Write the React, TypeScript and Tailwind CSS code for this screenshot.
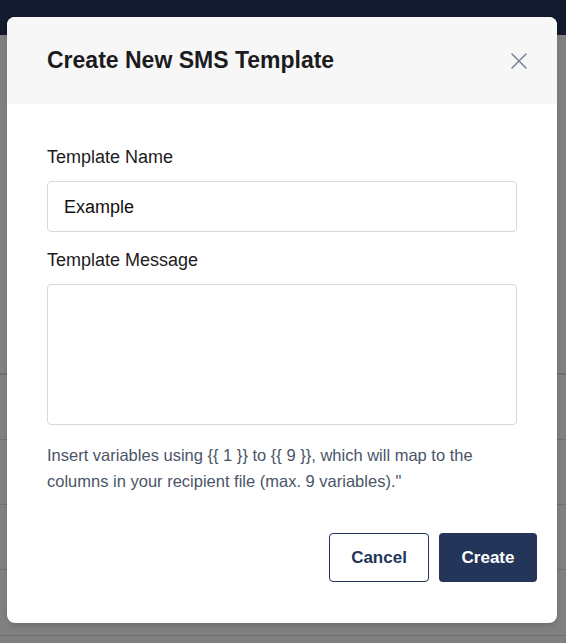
import { X } from "lucide-react";

export default function App() {
  return (
    <div className="relative h-[643px] w-[566px] overflow-hidden bg-[#808080] font-['Liberation_Sans',Arial,sans-serif]">
      <div className="h-[35px] bg-[#121a2d]" />
      <div className="h-[340px] border-b-2 border-[#6f6f6f]" />
      <div className="h-[65px] border-b border-[#6f6f6f]" />
      <div className="h-[65px] border-b border-[#6f6f6f]" />
      <div className="h-[65px] border-b border-[#6f6f6f]" />
      <div className="h-[66px] border-b border-[#6f6f6f]" />

      <div className="absolute left-[7px] top-[17px] w-[550px] overflow-hidden rounded-lg bg-white shadow-md">
        <div className="flex h-[87px] items-center justify-between bg-[#f7f7f7] pl-10 pr-6">
          <h2 className="text-[23px] font-bold text-[#1c1c1e]">Create New SMS Template</h2>
          <X size={28} strokeWidth={1.3} className="text-[#7a869a]" />
        </div>

        <div className="px-10 pt-[41px]">
          <label className="block text-lg leading-6 text-[#1c1c1e]">Template Name</label>
          <div className="mt-3 flex h-[51px] items-center rounded border border-[#d5d8dd] px-4 text-lg text-[#111]">
            Example
          </div>
          <label className="mt-4 block text-lg leading-6 text-[#1c1c1e]">Template Message</label>
          <div className="mt-3 h-[141px] rounded border border-[#d5d8dd]" />
          <p className="mt-[17px] text-[16.5px] leading-[26px] text-[#4a5568]">
            Insert variables using {"{{ 1 }}"} to {"{{ 9 }}"}, which will map to the columns in your recipient file (max. 9 variables)."
          </p>
        </div>

        <div className="flex justify-end gap-[10px] pb-[41px] pr-5 pt-[39px]">
          <button className="h-[49px] w-[100px] rounded border border-[#233559] text-[17px] font-bold text-[#233559]">
            Cancel
          </button>
          <button className="h-[49px] w-[98px] rounded bg-[#233559] text-[17px] font-bold text-white">
            Create
          </button>
        </div>
      </div>
    </div>
  );
}
